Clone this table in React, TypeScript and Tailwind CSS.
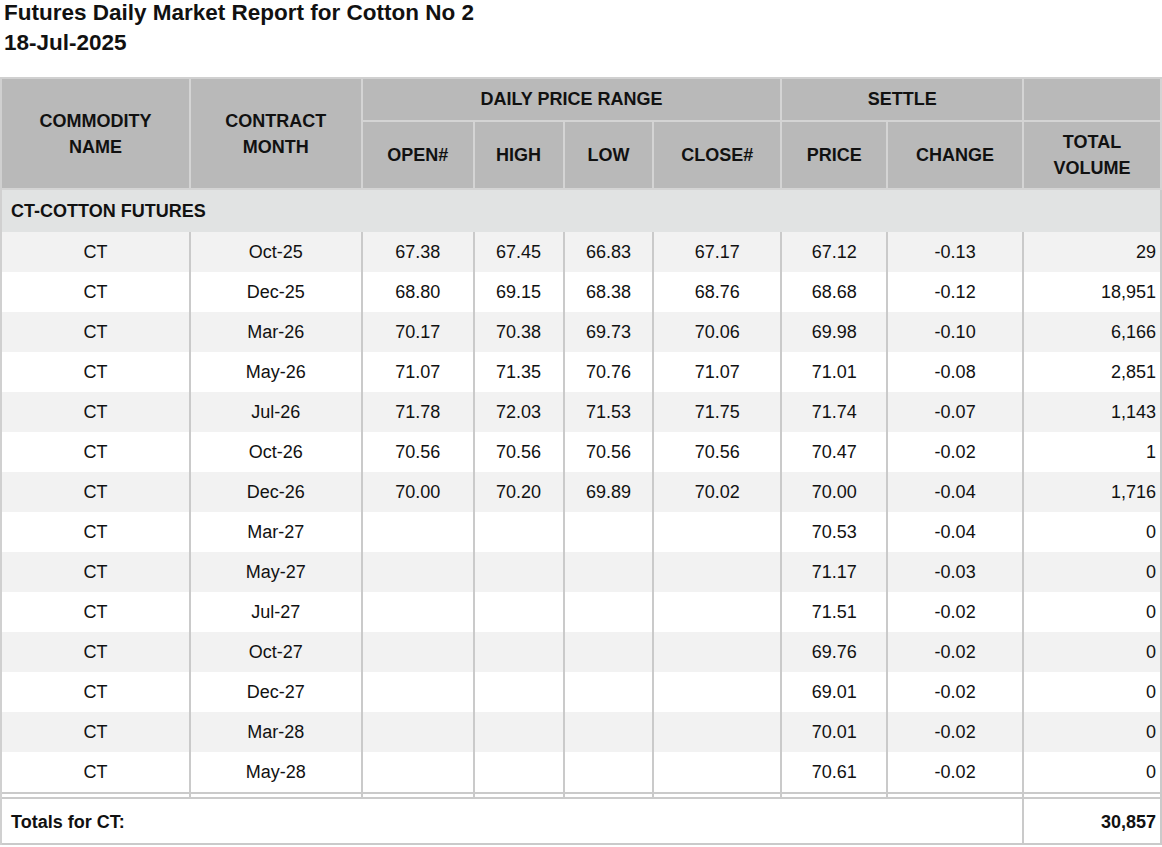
type Row = {
  month: string;
  open?: string;
  high?: string;
  low?: string;
  close?: string;
  price: string;
  change: string;
  volume: string;
};

const rows: Row[] = [
  { month: 'Oct-25', open: '67.38', high: '67.45', low: '66.83', close: '67.17', price: '67.12', change: '-0.13', volume: '29' },
  { month: 'Dec-25', open: '68.80', high: '69.15', low: '68.38', close: '68.76', price: '68.68', change: '-0.12', volume: '18,951' },
  { month: 'Mar-26', open: '70.17', high: '70.38', low: '69.73', close: '70.06', price: '69.98', change: '-0.10', volume: '6,166' },
  { month: 'May-26', open: '71.07', high: '71.35', low: '70.76', close: '71.07', price: '71.01', change: '-0.08', volume: '2,851' },
  { month: 'Jul-26', open: '71.78', high: '72.03', low: '71.53', close: '71.75', price: '71.74', change: '-0.07', volume: '1,143' },
  { month: 'Oct-26', open: '70.56', high: '70.56', low: '70.56', close: '70.56', price: '70.47', change: '-0.02', volume: '1' },
  { month: 'Dec-26', open: '70.00', high: '70.20', low: '69.89', close: '70.02', price: '70.00', change: '-0.04', volume: '1,716' },
  { month: 'Mar-27', price: '70.53', change: '-0.04', volume: '0' },
  { month: 'May-27', price: '71.17', change: '-0.03', volume: '0' },
  { month: 'Jul-27', price: '71.51', change: '-0.02', volume: '0' },
  { month: 'Oct-27', price: '69.76', change: '-0.02', volume: '0' },
  { month: 'Dec-27', price: '69.01', change: '-0.02', volume: '0' },
  { month: 'Mar-28', price: '70.01', change: '-0.02', volume: '0' },
  { month: 'May-28', price: '70.61', change: '-0.02', volume: '0' },
];

const colWidths = [189, 172, 112, 90, 90, 128, 106, 136, 138];

const th = 'border-r-2 border-b-2 border-[#d4d4d4] bg-[#b9b9b9] p-0 text-center align-middle font-bold';
const td = 'border-r-2 border-[#cacaca] p-0 text-center align-middle';

export default function App() {
  return (
    <div className="min-h-[847px] bg-white font-['Liberation_Sans',Arial,sans-serif] text-[#111]">
      <div className="-mt-[2px] pl-[4px] text-[22.5px] font-bold leading-[30px]">
        <div>Futures Daily Market Report for Cotton No 2</div>
        <div>18-Jul-2025</div>
      </div>

      <table className="mt-[19px] table-fixed border-separate border-spacing-0 border-t-2 border-l-2 border-[#d0d0d0] text-[18px]">
        <colgroup>
          {colWidths.map((w, i) => (
            <col key={i} style={{ width: w }} />
          ))}
        </colgroup>
        <thead>
          <tr className="h-[43px]">
            <th rowSpan={2} className={`${th} leading-[26px]`}>
              COMMODITY
              <br />
              NAME
            </th>
            <th rowSpan={2} className={`${th} leading-[26px]`}>
              CONTRACT
              <br />
              MONTH
            </th>
            <th colSpan={4} className={th}>DAILY PRICE RANGE</th>
            <th colSpan={2} className={th}>SETTLE</th>
            <th className={th}></th>
          </tr>
          <tr className="h-[68px]">
            <th className={th}>OPEN#</th>
            <th className={th}>HIGH</th>
            <th className={th}>LOW</th>
            <th className={th}>CLOSE#</th>
            <th className={th}>PRICE</th>
            <th className={th}>CHANGE</th>
            <th className={`${th} leading-[26px]`}>
              TOTAL
              <br />
              VOLUME
            </th>
          </tr>
        </thead>
        <tbody>
          <tr className="h-[42px]">
            <td colSpan={9} className="border-r-2 border-[#cacaca] bg-[#e1e3e3] p-0 pl-[9px] text-left align-middle font-bold">
              CT-COTTON FUTURES
            </td>
          </tr>
          {rows.map((r, i) => {
            const last = i === rows.length - 1;
            const b = last ? 'border-b-2' : '';
            return (
              <tr key={r.month} className={`${last ? 'h-[42px]' : 'h-[40px]'} ${i % 2 === 0 ? 'bg-[#f2f2f2]' : 'bg-white'}`}>
                <td className={`${td} ${b}`}>CT</td>
                <td className={`${td} ${b}`}>{r.month}</td>
                <td className={`${td} ${b}`}>{r.open}</td>
                <td className={`${td} ${b}`}>{r.high}</td>
                <td className={`${td} ${b}`}>{r.low}</td>
                <td className={`${td} ${b}`}>{r.close}</td>
                <td className={`${td} ${b}`}>{r.price}</td>
                <td className={`${td} ${b}`}>{r.change}</td>
                <td className={`${td} ${b} pr-[4px] text-right`}>{r.volume}</td>
              </tr>
            );
          })}
          <tr className="h-[5px]">
            {colWidths.map((_, i) => (
              <td key={i} className="border-r-2 border-b-2 border-[#cacaca] p-0"></td>
            ))}
          </tr>
          <tr className="h-[46px]">
            <td colSpan={8} className="border-r-2 border-b-2 border-[#cacaca] p-0 pt-[2px] pl-[9px] text-left align-middle font-bold">
              Totals for CT:
            </td>
            <td className="border-r-2 border-b-2 border-[#cacaca] p-0 pt-[2px] pr-[4px] text-right align-middle font-bold">
              30,857
            </td>
          </tr>
        </tbody>
      </table>
    </div>
  );
}
